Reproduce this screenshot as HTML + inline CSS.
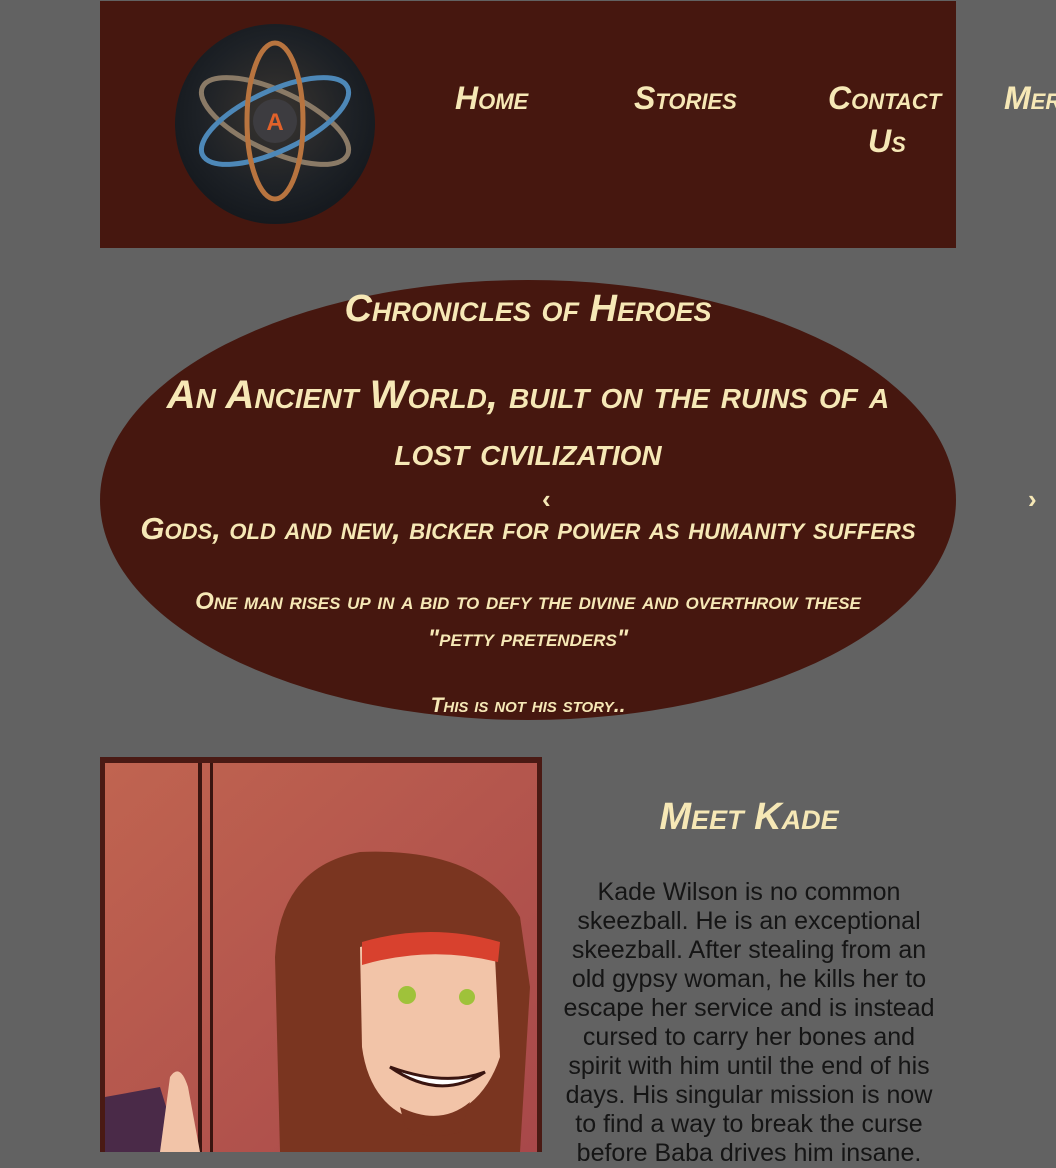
<!DOCTYPE html>
<html><head><meta charset="utf-8"><style>
html,body{margin:0;padding:0;}
body{width:1056px;height:1152px;overflow:hidden;background:#626262;position:relative;font-family:"Liberation Sans",sans-serif;}
.hd{position:absolute;left:100px;top:1px;width:856px;height:247px;background:#46170f;}
.m{position:absolute;color:#f6e8b6;font-family:"Liberation Sans",sans-serif;font-weight:bold;font-style:italic;font-variant:small-caps;white-space:nowrap;line-height:1;}
.c{text-align:center;left:0;width:1056px;}
.ell{position:absolute;left:100px;top:280px;width:856px;height:440px;border-radius:50%;background:#46170f;}
.body{position:absolute;left:557px;top:878px;width:384px;text-align:center;font-size:25px;line-height:29px;color:#151515;}
</style></head><body>
<div class="hd"></div>
<svg style="position:absolute;left:174px;top:23px" width="202" height="202" viewBox="0 0 202 202">
<defs><radialGradient id="g" cx="50%" cy="45%" r="55%"><stop offset="0" stop-color="#3a3530"/><stop offset="0.7" stop-color="#1d2126"/><stop offset="1" stop-color="#15191e"/></radialGradient></defs>
<circle cx="101" cy="101" r="100" fill="url(#g)"/>
<g fill="none" stroke-width="5">
<ellipse cx="101" cy="98" rx="80" ry="30" stroke="#8a7a66" transform="rotate(25 101 98)"/>
<ellipse cx="101" cy="98" rx="80" ry="30" stroke="#4d88b8" transform="rotate(-25 101 98)"/>
<ellipse cx="101" cy="98" rx="78" ry="28" stroke="#b8743f" transform="rotate(90 101 98)"/>
</g>
<circle cx="101" cy="98" r="22" fill="#3d3c40"/>
<text x="101" y="107" text-anchor="middle" font-family="Liberation Sans" font-weight="bold" font-size="24" fill="#e2622a">A</text>
</svg>
<div class="m" style="left:455px;top:82px;font-size:32px">Home</div>
<div class="m" style="left:634px;top:82px;font-size:32px">Stories</div>
<div class="m" style="left:828px;top:82px;font-size:32px">Contact</div>
<div class="m" style="left:868px;top:125px;font-size:32px">Us</div>
<div class="m" style="left:1004px;top:82px;font-size:32px">Merch</div>
<div class="ell"></div>
<div class="m c" style="top:290px;font-size:38px">Chronicles of Heroes</div>
<div class="m c" style="top:375px;font-size:40px">An Ancient World, built on the ruins of a</div>
<div class="m c" style="top:432px;font-size:40px">lost civilization</div>
<div class="m" style="left:542px;top:486px;font-size:26px;font-style:normal">‹</div>
<div class="m" style="left:1028px;top:486px;font-size:26px;font-style:normal">›</div>
<div class="m c" style="top:513px;font-size:31px">Gods, old and new, bicker for power as humanity suffers</div>
<div class="m c" style="top:590px;font-size:24px">One man rises up in a bid to defy the divine and overthrow these</div>
<div class="m c" style="top:627px;font-size:24px">"petty pretenders"</div>
<div class="m c" style="top:695px;font-size:21px">This is not his story..</div>
<svg style="position:absolute;left:100px;top:757px" width="442" height="395" viewBox="0 0 442 395">
<defs><linearGradient id="w" x1="0" y1="0" x2="1" y2="1"><stop offset="0" stop-color="#c06450"/><stop offset="1" stop-color="#a8484a"/></linearGradient></defs>
<rect width="442" height="395" fill="#4a1a14"/>
<rect x="5" y="6" width="432" height="389" fill="url(#w)"/>
<rect x="98" y="6" width="4" height="389" fill="#3a1510"/><rect x="110" y="6" width="3" height="389" fill="#3a1510"/>
<path d="M180 395 L175 200 Q180 110 260 95 Q380 90 420 160 L430 230 L420 395 Z" fill="#7a3520"/>
<path d="M260 190 Q330 175 395 200 L400 300 Q380 360 320 365 Q270 350 262 290 Z" fill="#f2c4a8"/>
<path d="M262 185 Q330 165 400 185 L398 205 Q330 188 262 208 Z" fill="#d8412e"/>
<circle cx="307" cy="238" r="9" fill="#9fc23a"/><circle cx="367" cy="240" r="8" fill="#9fc23a"/>
<path d="M290 310 Q340 345 385 315 Q345 330 290 310 Z" fill="#fff" stroke="#3a1510" stroke-width="3"/>
<path d="M300 350 Q340 370 370 345 L360 375 Q330 385 305 370 Z" fill="#7a3520"/>
<path d="M5 340 L60 330 L80 395 L5 395 Z" fill="#4a2a48"/>
<path d="M60 395 L70 320 Q80 305 88 330 L100 395 Z" fill="#f2c4a8"/>
</svg>
<div class="m" style="left:559px;width:380px;text-align:center;top:798px;font-size:38px">Meet Kade</div>
<div class="body">Kade Wilson is no common skeezball. He is an exceptional skeezball. After stealing from an old gypsy woman, he kills her to escape her service and is instead cursed to carry her bones and spirit with him until the end of his days. His singular mission is now to find a way to break the curse before Baba drives him insane.</div>
</body></html>
